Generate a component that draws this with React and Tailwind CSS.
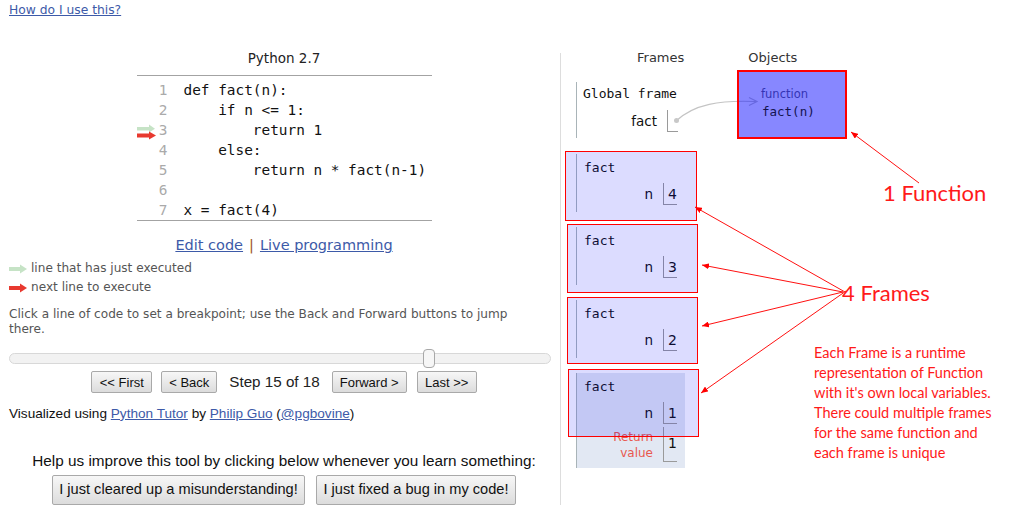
import React from 'react'

const codeLines = [
  'def fact(n):',
  '    if n <= 1:',
  '        return 1',
  '    else:',
  '        return n * fact(n-1)',
  '',
  'x = fact(4)',
]

const frames = [
  { n: '4', box: 'left-[-12px] top-[-3px] w-[132px] h-[70px]' },
  { n: '3', box: 'left-[-10px] top-[-3px] w-[131px] h-[69px]' },
  { n: '2', box: 'left-[-10px] top-[-3px] w-[131px] h-[67px]' },
  { n: '1', box: 'left-[-9px] top-[-4px] w-[131px] h-[68px]', ret: '1' },
]

function Arrow({ color }) {
  return (
    <svg width="18" height="10" viewBox="0 0 18 10">
      <rect x="0" y="3" width="12" height="4" fill={color} />
      <polygon points="11,0.5 18,5 11,9.5" fill={color} />
    </svg>
  )
}

function GutterArrows() {
  return (
    <svg width="19" height="20" viewBox="0 0 19 20">
      <rect x="0" y="7" width="13" height="3.5" fill="#c6e3c6" />
      <polygon points="12,4.5 18,8.7 12,12.5" fill="#c6e3c6" />
      <rect x="0" y="13.5" width="13" height="4" fill="#e8392f" />
      <polygon points="12,11.5 19,15.5 12,19.5" fill="#e8392f" />
    </svg>
  )
}

function Btn({ children, className }) {
  return (
    <button
      type="button"
      className={`rounded-[2px] border border-[#a9a9a9] bg-linear-to-b from-[#f7f7f7] to-[#dcdcdc] text-[#111] ${className}`}
    >
      {children}
    </button>
  )
}

function LeftPanel() {
  return (
    <div className="w-[560px] pl-[9px] pr-px">
      <div className="h-[16px] text-center text-[13.5px] leading-[16px] text-[#222]">Python 2.7</div>

      <div className="mx-auto mt-[9px] w-[295px] border-y border-[#a3a3a3] pt-[4px] font-['DejaVu_Sans_Mono',monospace] text-[14.4px]">
        {codeLines.map((line, i) => (
          <div key={i} className="flex h-[20px] items-center leading-[20px]">
            <div className="h-[20px] w-[19px]">{i === 2 && <GutterArrows />}</div>
            <span className="w-[12px] text-right text-[#aaaaaa]">{i + 1}</span>
            <span className="whitespace-pre pl-[16px] text-[#111]">{line}</span>
          </div>
        ))}
      </div>

      <div className="mt-[15px] text-center text-[14.5px] leading-[18px]">
        <a href="#" className="text-[#3d5aa8] underline">Edit code</a>
        <span className="mx-[6px] text-[#a0561f]">|</span>
        <a href="#" className="text-[#3d5aa8] underline">Live programming</a>
      </div>

      <div className="mt-[5px] text-[12.1px] leading-[19px] text-[#555]">
        <div className="flex items-center gap-[4px]">
          <Arrow color="#c6e3c6" />
          <span>line that has just executed</span>
        </div>
        <div className="flex items-center gap-[4px]">
          <Arrow color="#e8392f" />
          <span>next line to execute</span>
        </div>
      </div>

      <p className="mt-[10px] w-[525px] text-[12.1px] leading-[15px] text-[#555]">
        Click a line of code to set a breakpoint; use the Back and Forward buttons to jump there.
      </p>

      <div className="relative mt-[16px] h-[11px] w-[542px] rounded-full border border-[#d8d8d8] bg-[#f2f2f2]">
        <div className="absolute left-[413px] top-[-5px] h-[19px] w-[12px] rounded-[4px] border border-[#a8a8a8] bg-[#f6f6f6]" />
      </div>

      <div className="mt-[7px] flex items-center justify-center font-['Liberation_Sans',Arial,sans-serif] text-[13px]">
        <Btn className="h-[22px] w-[61px]">&lt;&lt; First</Btn>
        <Btn className="ml-[9px] h-[22px] w-[56px]">&lt; Back</Btn>
        <span className="mx-[12px] text-[15.2px] text-[#222]">Step 15 of 18</span>
        <Btn className="h-[22px] w-[75px]">Forward &gt;</Btn>
        <Btn className="ml-[10px] h-[22px] w-[60px]">Last &gt;&gt;</Btn>
      </div>

      <div className="mt-[12px] font-['Liberation_Sans',Arial,sans-serif] text-[13.6px] leading-[16px] text-[#111]">
        Visualized using <a href="#" className="text-[#3d5aa8] underline">Python Tutor</a> by{' '}
        <a href="#" className="text-[#3d5aa8] underline">Philip Guo</a> (
        <a href="#" className="text-[#3d5aa8] underline">@pgbovine</a>)
      </div>

      <div className="mt-[30px] text-center font-['Liberation_Sans',Arial,sans-serif] text-[15.3px] leading-[17px] text-[#111]">
        Help us improve this tool by clicking below whenever you learn something:
      </div>
      <div className="mt-[6px] flex justify-center gap-[11px] font-['Liberation_Sans',Arial,sans-serif] text-[14.6px]">
        <Btn className="h-[30px] w-[253px]">I just cleared up a misunderstanding!</Btn>
        <Btn className="h-[30px] w-[200px]">I just fixed a bug in my code!</Btn>
      </div>
    </div>
  )
}

function StackFrame({ frame, last }) {
  return (
    <div
      className={`relative ml-[11px] w-[109px] border-l border-[#a9b4b8] pl-[7px] pt-[6px] ${
        last ? 'bg-[#e2e8f3] pb-[6px]' : 'pb-[7px]'
      }`}
    >
      <div className="font-['DejaVu_Sans_Mono',monospace] text-[13px] leading-[16px] text-[#111]">fact</div>
      <div className="mt-[7px] flex">
        <span className="w-[69px] text-right text-[13.5px] leading-[22px] text-[#111]">n</span>
        <span className="ml-[10px] h-[22px] w-[14px] border-b border-l border-[#9a9a9a] pl-[4px] text-[14px] leading-[22px] text-[#111]">
          {frame.n}
        </span>
      </div>
      {frame.ret && (
        <div className="mt-[3px] flex">
          <span className="w-[69px] pt-[2px] text-right text-[12px] leading-[16px] text-[#e8584f]">
            Return
            <br />
            value
          </span>
          <span className="ml-[10px] h-[35px] w-[14px] border-b border-l border-[#9a9a9a] pl-[4px] pt-[7px] text-[14px] leading-[18px] text-[#111]">
            {frame.ret}
          </span>
        </div>
      )}
      <div className={`absolute border border-[#ff0000] bg-[#0000ff23] ${frame.box}`} />
    </div>
  )
}

function RightPanel() {
  return (
    <div className="relative flex-1">
      <div className="flex h-[16px] text-[13px] leading-[16px] text-[#333]">
        <span className="ml-[76px]">Frames</span>
        <span className="ml-[64px]">Objects</span>
      </div>

      <div className="flex items-start">
        <div className="w-[176px] pl-[4px]">
          <div className="ml-[11px] mt-[16px] border-l border-[#a9b4b8] pb-[6px] pl-[6px] pt-[4px]">
            <div className="font-['DejaVu_Sans_Mono',monospace] text-[13px] leading-[16px] text-[#111]">Global frame</div>
            <div className="mt-[8px] flex">
              <span className="w-[74px] text-right text-[13.5px] leading-[22px] text-[#111]">fact</span>
              <span className="ml-[10px] flex h-[22px] w-[11px] items-center border-b border-l border-[#9a9a9a]">
                <span className="ml-[6px] h-[5px] w-[5px] shrink-0 rounded-full bg-[#c8c8c8]" />
              </span>
            </div>
          </div>

          <div className="mt-[16px] flex flex-col gap-[15px]">
            {frames.map((f, i) => (
              <StackFrame key={i} frame={f} last={i === frames.length - 1} />
            ))}
          </div>
        </div>

        <div className="relative mt-[4px] h-[69px] w-[110px] border-2 border-[#ff0000] bg-[#0000ff78] pl-[22px] pt-[15px]">
          <div className="text-[11.5px] leading-[14px] text-[#3434b4]">function</div>
          <div className="mt-[3px] pl-px font-['DejaVu_Sans_Mono',monospace] text-[12.5px] leading-[16px] text-[#141450]">
            fact(n)
          </div>
        </div>
      </div>
    </div>
  )
}

function PointerArrow() {
  return (
    <svg className="pointer-events-none absolute left-0 top-0" width="1035" height="528">
      <path d="M676 121 C 694 104, 720 100, 756 101.5" fill="none" stroke="#c4c4c4" strokeWidth="1.2" />
      <path d="M749 97.5 L757 101.5 L749 105.5" fill="none" stroke="#c4c4c4" strokeWidth="1.2" />
    </svg>
  )
}

function Annotations() {
  return (
    <>
      <svg className="pointer-events-none absolute left-0 top-0" width="1035" height="528">
        <defs>
          <marker
            id="ah"
            markerWidth="7"
            markerHeight="6"
            refX="7"
            refY="3"
            orient="auto-start-reverse"
            markerUnits="userSpaceOnUse"
          >
            <path d="M0,0 L7,3 L0,6 z" fill="#ff0000" />
          </marker>
        </defs>
        <g stroke="#ff1010" strokeWidth="1">
          <line x1="851" y1="132" x2="919" y2="183" markerStart="url(#ah)" />
          <line x1="695" y1="207" x2="845" y2="292" markerStart="url(#ah)" />
          <line x1="702" y1="265" x2="843" y2="292" markerStart="url(#ah)" />
          <line x1="702" y1="326" x2="843" y2="292" markerStart="url(#ah)" />
          <line x1="701" y1="393" x2="846" y2="291" markerStart="url(#ah)" />
        </g>
      </svg>
      <div className="absolute left-[883px] top-[179px] font-['Lato',sans-serif] text-[22px] leading-[28px] text-[#ff1a1a]">
        1 Function
      </div>
      <div className="absolute left-[842px] top-[279px] font-['Lato',sans-serif] text-[22px] leading-[28px] text-[#ff1a1a]">
        4 Frames
      </div>
      <div className="absolute left-[814px] top-[343px] font-['Lato',sans-serif] text-[14.5px] leading-[20px] text-[#ff1a1a]">
        Each Frame is a runtime
        <br />
        representation of Function
        <br />
        with it's own local variables.
        <br />
        There could multiple frames
        <br />
        for the same function and
        <br />
        each frame is unique
      </div>
    </>
  )
}

export default function App() {
  return (
    <div className="relative h-[528px] w-full overflow-hidden bg-white font-['DejaVu_Sans',Verdana,sans-serif] text-[#222]">
      <PointerArrow />
      <div className="h-[50px] pl-[9px] pt-[2px] text-[12.3px] leading-[16px]">
        <a href="#" className="text-[#3d5aa8] underline">
          How do I use this?
        </a>
      </div>
      <div className="flex items-start">
        <LeftPanel />
        <div className="mt-[3px] h-[452px] w-px shrink-0 bg-[#dddddd]" />
        <RightPanel />
      </div>
      <Annotations />
    </div>
  )
}
